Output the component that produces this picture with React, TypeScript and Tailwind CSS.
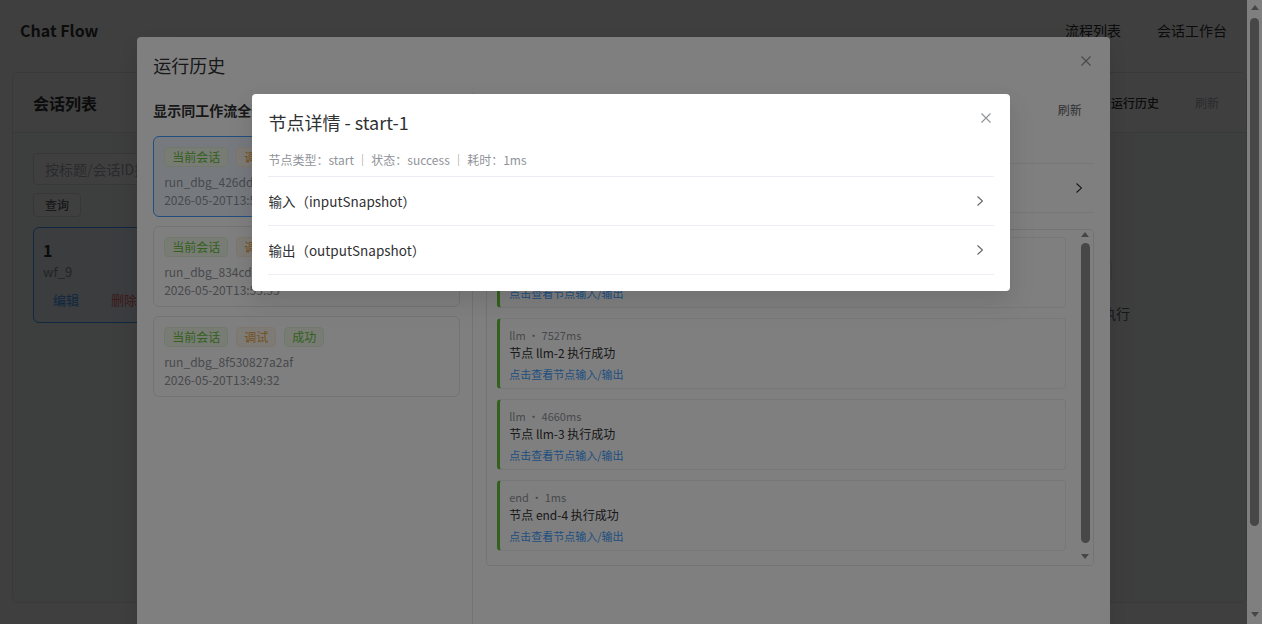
import React from "react";

type Run = { id: string; time: string; active?: boolean };
type Log = { kind: string; cost: string; node: string };

const runs: Run[] = [
  { id: "run_dbg_426dd1c0b7e2", time: "2026-05-20T13:58:41", active: true },
  { id: "run_dbg_834cd5a91f03", time: "2026-05-20T13:55:55" },
  { id: "run_dbg_8f530827a2af", time: "2026-05-20T13:49:32" },
];

const logs: Log[] = [
  { kind: "start", cost: "1ms", node: "start-1" },
  { kind: "llm", cost: "7527ms", node: "llm-2" },
  { kind: "llm", cost: "4660ms", node: "llm-3" },
  { kind: "end", cost: "1ms", node: "end-4" },
];

function CloseIcon() {
  return (
    <svg viewBox="0 0 10 10" className="h-[10px] w-[10px]" fill="none" stroke="#909399" strokeWidth="1.1">
      <path d="M0.5 0.5l9 9M9.5 0.5l-9 9" />
    </svg>
  );
}

function Chevron({ color = "#606266" }: { color?: string }) {
  return (
    <svg viewBox="0 0 6 10" className="h-[10px] w-[6px]" fill="none" stroke={color} strokeWidth="1.1">
      <path d="M0.5 0.5l5 4.5-5 4.5" />
    </svg>
  );
}

function ArrowUp() {
  return <div className="h-0 w-0 border-x-4 border-b-[5px] border-x-transparent border-b-[#8c8c8c]" />;
}

function ArrowDown() {
  return <div className="h-0 w-0 border-x-4 border-t-[5px] border-x-transparent border-t-[#8c8c8c]" />;
}

function Tag({ text, tone }: { text: string; tone: "success" | "warning" }) {
  const cls =
    tone === "success"
      ? "bg-[#f0f9eb] border-[#e1f3d8] text-[#67c23a]"
      : "bg-[#fdf6ec] border-[#faecd8] text-[#e6a23c]";
  return (
    <span className={`inline-flex h-5 items-center rounded border px-[7px] text-xs ${cls}`}>{text}</span>
  );
}

function BasePage() {
  return (
    <div className="h-[730px] bg-white">
      <header className="flex h-[60px] items-center justify-between px-5">
        <div className="text-base font-bold text-[#303133]">Chat Flow</div>
        <nav className="flex gap-9 text-sm text-[#303133]">
          <span>流程列表</span>
          <span>会话工作台</span>
        </nav>
      </header>
      <div className="ml-3 mt-3 flex h-[531px] overflow-hidden rounded-md border border-[#e4e7ed]">
        <aside className="flex w-[320px] flex-col border-r border-[#e4e7ed] bg-[#f7f8fa]">
          <div className="flex h-[60px] items-center border-b border-[#e4e7ed] bg-white px-5 text-base font-bold text-[#303133]">
            会话列表
          </div>
          <div className="px-5 pt-5">
            <div className="flex h-8 items-center rounded border border-[#dcdfe6] bg-white px-[11px] text-sm text-[#a8abb2]">
              按标题/会话ID搜索
            </div>
            <button className="mt-2 h-6 rounded border border-[#dcdfe6] bg-white px-[11px] text-xs font-medium text-[#606266]">
              查询
            </button>
            <div className="mt-2.5 rounded-md border border-[#409eff] bg-[#ecf5ff] px-[9px] py-2.5">
              <div className="text-base font-bold leading-6 text-[#303133]">1</div>
              <div className="text-[13px] leading-5 text-[#909399]">wf_9</div>
              <div className="mt-1.5 flex gap-3 text-[13px]">
                <span className="px-2.5 leading-6 text-[#409eff]">编辑</span>
                <span className="px-2.5 leading-6 text-[#f56c6c]">删除</span>
              </div>
            </div>
          </div>
        </aside>
        <section className="flex flex-1 flex-col">
          <div className="flex h-[60px] items-center justify-between border-b border-[#e4e7ed] bg-white pl-5 pr-[16px]">
            <span className="text-base font-bold text-[#303133]">会话详情</span>
            <div className="flex gap-[14px] text-xs">
              <span className="px-[11px] font-medium text-[#303133]">运行历史</span>
              <span className="px-[11px] text-[#a8abb2]">刷新</span>
            </div>
          </div>
          <div className="flex flex-1 flex-col items-end bg-[#f7f8fa] pr-[116px] pt-[128px]">
            <div className="mr-[18px] h-5 w-24 rounded border border-[#dcdfe6] bg-white" />
            <div className="mt-[22px] text-sm text-[#606266]">输入消息后点击发送开始执行</div>
          </div>
        </section>
      </div>
    </div>
  );
}

function HistoryModal() {
  return (
    <div className="mx-auto mt-[37px] h-[620px] w-[78%] rounded bg-white px-4 pt-4 shadow-[0_12px_32px_4px_rgba(0,0,0,0.04),0_8px_20px_rgba(0,0,0,0.08)]">
      <div className="relative pb-4">
        <div className="text-lg leading-6 text-[#303133]">运行历史</div>
        <div className="absolute -right-4 -top-4 flex h-12 w-12 items-center justify-center">
          <CloseIcon />
        </div>
      </div>
      <div className="flex h-[560px]">
        <div className="w-[319px] pr-3">
          <div className="flex h-[34px] items-center text-sm font-bold text-[#303133]">显示同工作流全部运行</div>
          <div className="mt-[9px] flex flex-col gap-[9px]">
            {runs.map((r) => (
              <div
                key={r.id}
                className={`h-[81px] rounded-md border px-[10px] pt-2.5 ${
                  r.active ? "border-[#409eff] bg-[#ecf5ff]" : "border-[#e4e7ed] bg-white"
                }`}
              >
                <div className="flex gap-2">
                  <Tag text="当前会话" tone="success" />
                  <Tag text="调试" tone="warning" />
                  <Tag text="成功" tone="success" />
                </div>
                <div className="mt-[6px] text-xs leading-[18px] text-[#909399]">{r.id}</div>
                <div className="text-xs leading-[18px] text-[#909399]">{r.time}</div>
              </div>
            ))}
          </div>
        </div>
        <div className="flex-1 border-l border-[#e4e7ed] pl-[13px]">
          <div className="flex h-[34px] items-center justify-between">
            <span className="text-sm font-bold text-[#303133]">执行轨迹</span>
            <span className="pr-3 text-xs text-[#606266]">刷新</span>
          </div>
          <div className="mt-[36px] flex h-[50px] items-center justify-between border-y border-[#ebeef5] pr-[12px]">
            <span className="text-[13px] text-[#303133]">运行详情</span>
            <Chevron color="#303133" />
          </div>
          <div className="mt-4 flex h-[337px] overflow-hidden rounded border border-[#e4e7ed]">
            <div className="flex flex-1 flex-col gap-2.5 pl-2.5 pr-3 pt-[7px]">
              {logs.map((l) => (
                <div
                  key={l.node}
                  className="h-[71px] shrink-0 rounded border border-l-[3px] border-[#ebeef5] border-l-[#67c23a] bg-white pl-[9px] pt-[7px]"
                >
                  <div className="text-[11px] leading-[18px] text-[#909399]">
                    {l.kind} • {l.cost}
                  </div>
                  <div className="text-xs leading-[18px] text-[#303133]">节点 {l.node} 执行成功</div>
                  <div className="mt-[3px] text-[11px] leading-[18px] text-[#409eff]">点击查看节点输入/输出</div>
                </div>
              ))}
            </div>
            <div className="flex w-[15px] flex-col items-center bg-white">
              <div className="mt-[2px]">
                <ArrowUp />
              </div>
              <div className="mt-[6px] h-[300px] w-[9px] rounded-full bg-[#8f8f8f]" />
              <div className="mt-[11px]">
                <ArrowDown />
              </div>
            </div>
          </div>
        </div>
      </div>
    </div>
  );
}

function NodeModal() {
  return (
    <div className="relative mx-auto mt-[94px] w-[60%] rounded bg-white p-4 shadow-[0_12px_32px_4px_rgba(0,0,0,0.04),0_8px_20px_rgba(0,0,0,0.08)]">
      <div className="pb-4 text-lg leading-6 text-[#303133]">节点详情 - start-1</div>
      <div className="absolute right-0 top-0 flex h-12 w-12 items-center justify-center">
        <CloseIcon />
      </div>
      <div className="mb-1.5 text-xs leading-5 text-[#909399]">节点类型：start ｜ 状态：success ｜ 耗时：1ms</div>
      <div className="border-t border-[#ebeef5]">
        {["输入（inputSnapshot）", "输出（outputSnapshot）"].map((t) => (
          <div key={t} className="flex h-[49px] items-center justify-between border-b border-[#ebeef5] pr-[11px]">
            <span className="text-[13.5px] text-[#303133]">{t}</span>
            <Chevron />
          </div>
        ))}
      </div>
    </div>
  );
}

function PageScrollbar() {
  return (
    <div className="flex h-full w-[15px] flex-col items-center bg-white">
      <div className="mt-[5px]">
        <ArrowUp />
      </div>
      <div className="mt-2 h-[508px] w-[9px] rounded-full bg-[#8f8f8f]" />
      <div className="mt-[86px]">
        <ArrowDown />
      </div>
    </div>
  );
}

export default function App() {
  return (
    <div className="relative flex h-screen overflow-hidden font-['Noto_Sans_CJK_SC',sans-serif]">
      <div className="relative flex-1 overflow-hidden">
        <BasePage />
        <div className="absolute inset-0 overflow-hidden bg-black/50">
          <HistoryModal />
        </div>
      </div>
      <PageScrollbar />
      <div className="absolute inset-0 bg-black/50">
        <NodeModal />
      </div>
    </div>
  );
}
